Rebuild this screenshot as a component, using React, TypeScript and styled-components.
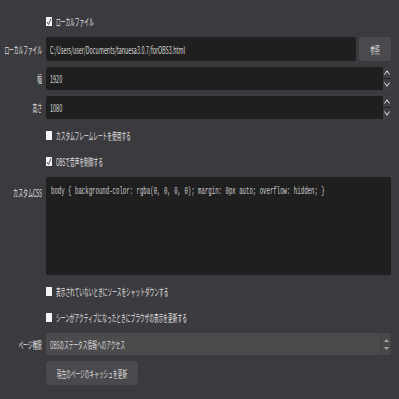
import styled, { createGlobalStyle } from 'styled-components';

const Global = createGlobalStyle`
  html, body {
    margin: 0;
    padding: 0;
    background: #3b3a3e;
  }
  body {
    font-family: "Noto Sans CJK JP", "Noto Sans", sans-serif;
    font-size: 10px;
    color: #e2e2e2;
  }
`;

const Page = styled.div`
  width: 399px;
  height: 399px;
  box-sizing: border-box;
  padding: 11px 8px 0 0;
  display: grid;
  grid-template-columns: 42px 1fr;
  column-gap: 4px;
  row-gap: 6px;
  align-content: start;
`;

const Label = styled.div<{ $top?: boolean }>`
  display: flex;
  justify-content: flex-end;
  align-items: ${(p) => (p.$top ? 'flex-start' : 'center')};
  padding-top: ${(p) => (p.$top ? '8px' : '0')};
  overflow: visible;
  white-space: nowrap;
`;

const Txt = styled.span<{ $sx?: number; $origin?: string }>`
  display: inline-block;
  white-space: nowrap;
  transform: scaleX(${(p) => p.$sx ?? 0.47});
  transform-origin: ${(p) => p.$origin ?? 'left'} center;
`;

const CheckRow = styled.div`
  grid-column: 2;
  height: 20px;
  display: flex;
  align-items: center;
  gap: 4px;
`;

const Field = styled.div<{ $h: number }>`
  height: ${(p) => p.$h}px;
  display: flex;
  gap: 3px;
`;

const Input = styled.div`
  flex: 1;
  background: #1f1f1f;
  border-radius: 2px;
  display: flex;
  align-items: center;
  padding-left: 4px;
  color: #d8d8d8;
  overflow: hidden;
`;

const Button = styled.div<{ $w: number }>`
  width: ${(p) => p.$w}px;
  background: #4a494d;
  border-radius: 3px;
  display: flex;
  align-items: center;
  justify-content: center;
  color: #dedede;
`;

const SpinBox = styled.div`
  flex: 1;
  display: flex;
  background: #1f1f1f;
  border-radius: 2px;
`;

const SpinText = styled.div`
  flex: 1;
  display: flex;
  align-items: center;
  padding-left: 4px;
  color: #d8d8d8;
`;

const Spin = styled.div`
  width: 8px;
  display: flex;
  flex-direction: column;
  gap: 1px;
`;

const SpinBtn = styled.div`
  flex: 1;
  background: #3f3e42;
  display: flex;
  align-items: center;
  justify-content: center;
`;

const Code = styled.div`
  height: 98px;
  background: #1f1f1f;
  border-radius: 2px;
  padding: 9px 0 0 5px;
  box-sizing: border-box;
  font-family: "Liberation Mono", "DejaVu Sans Mono", monospace;
  font-size: 10px;
  color: #cfcfcf;
  overflow: hidden;
`;

const Combo = styled.div`
  height: 22px;
  display: flex;
  background: #4b4b4d;
  border-radius: 2px;
  overflow: hidden;
`;

const ComboText = styled.div`
  flex: 1;
  display: flex;
  align-items: center;
  padding-left: 4px;
  color: #dcdcdc;
`;

const ComboArrows = styled.div`
  width: 10px;
  border-left: 1px solid #3e3e40;
  background: #484849;
  display: flex;
  flex-direction: column;
  align-items: center;
  justify-content: center;
  gap: 5px;
`;

const Check = ({ on }: { on?: boolean }) => (
  <svg width="6" height="9" viewBox="0 0 6 9">
    <rect x="0" y="0" width="6" height="9" fill="#f4f4f4" />
    {on && <path d="M1 5 L2.5 7.5 L5 1.5" stroke="#555" strokeWidth="1" fill="none" />}
  </svg>
);

const Chevron = ({ up }: { up?: boolean }) => (
  <svg width="6" height="5" viewBox="0 0 6 5">
    <path d={up ? 'M0.5 4.5 L3 0.8 L5.5 4.5' : 'M0.5 0.5 L3 4.2 L5.5 0.5'} stroke="#e6e6e6" strokeWidth="1" fill="none" />
  </svg>
);

const Tri = ({ up }: { up?: boolean }) => (
  <svg width="5" height="3" viewBox="0 0 5 3">
    <path d={up ? 'M0 3 L2.5 0 L5 3 Z' : 'M0 0 L2.5 3 L5 0 Z'} fill="#a9a9a9" />
  </svg>
);

const NumberField = ({ value }: { value: string }) => (
  <Field $h={23}>
    <SpinBox>
      <SpinText>
        <Txt $sx={0.55}>{value}</Txt>
      </SpinText>
      <Spin>
        <SpinBtn>
          <Chevron up />
        </SpinBtn>
        <SpinBtn>
          <Chevron />
        </SpinBtn>
      </Spin>
    </SpinBox>
  </Field>
);

const App = () => {
  return (
    <>
      <Global />
      <Page>
        <CheckRow>
          <Check on />
          <Txt>ローカルファイル</Txt>
        </CheckRow>

        <Label>
          <Txt $origin="right">ローカルファイル</Txt>
        </Label>
        <Field $h={24}>
          <Input>
            <Txt $sx={0.54}>C:/Users/user/Documents/tanuesa3.0.7/forOBS3.html</Txt>
          </Input>
          <Button $w={32}>
            <Txt $origin="center">参照</Txt>
          </Button>
        </Field>

        <Label>
          <Txt $origin="right">幅</Txt>
        </Label>
        <NumberField value="1920" />

        <Label>
          <Txt $origin="right">高さ</Txt>
        </Label>
        <NumberField value="1080" />

        <CheckRow>
          <Check />
          <Txt>カスタムフレームレートを使用する</Txt>
        </CheckRow>
        <CheckRow>
          <Check on />
          <Txt>OBSで音声を制御する</Txt>
        </CheckRow>

        <Label $top>
          <Txt $origin="right" $sx={0.5}>カスタムCSS</Txt>
        </Label>
        <Code>
          <Txt $sx={0.57}>body {'{'} background-color: rgba(0, 0, 0, 0); margin: 0px auto; overflow: hidden; {'}'}</Txt>
        </Code>

        <CheckRow>
          <Check />
          <Txt>表示されていないときにソースをシャットダウンする</Txt>
        </CheckRow>
        <CheckRow>
          <Check />
          <Txt>シーンがアクティブになったときにブラウザの表示を更新する</Txt>
        </CheckRow>

        <Label>
          <Txt $origin="right">ページ権限</Txt>
        </Label>
        <Combo>
          <ComboText>
            <Txt>OBSのステータス情報へのアクセス</Txt>
          </ComboText>
          <ComboArrows>
            <Tri up />
            <Tri />
          </ComboArrows>
        </Combo>

        <span />
        <Field $h={24}>
          <Button $w={92}>
            <Txt $origin="center">現在のページのキャッシュを更新</Txt>
          </Button>
        </Field>
      </Page>
    </>
  );
};

export default App;
